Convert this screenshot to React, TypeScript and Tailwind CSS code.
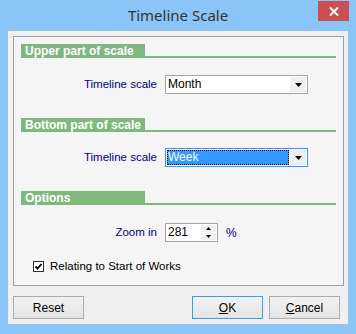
import React from "react";

const ui = { fontFamily: '"Liberation Sans", Arial, sans-serif' };

function Header({ title }: { title: string }) {
  return (
    <div className="flex h-[14px] ml-[7px] mr-[7px]">
      <div className="w-[124px] bg-[#7fb77f] text-white font-bold text-[12px] leading-[14px] pl-[4px] whitespace-nowrap overflow-hidden">
        {title}
      </div>
      <div className="flex-1 border-b-[2px] border-[#7fb77f]" />
    </div>
  );
}

function Arrow() {
  return (
    <svg width="7" height="4" viewBox="0 0 7 4">
      <path d="M0 0H7L3.5 4Z" fill="#000" />
    </svg>
  );
}

function Select({ value, focused }: { value: string; focused?: boolean }) {
  return (
    <div
      className={
        "ml-[8px] w-[143px] h-[19px] flex items-stretch bg-white border " +
        (focused ? "border-[#3399ff]" : "border-[#a5a5a5]")
      }
    >
      <div className="flex-1 flex items-stretch p-[1px]">
        {focused ? (
          <div className="flex-1 bg-[#3399ff] outline-1 outline-dotted outline-black -outline-offset-1 text-white text-[12px] leading-[15px] pl-[1px]">
            {value}
          </div>
        ) : (
          <div className="flex-1 text-black text-[12px] leading-[15px] pl-[1px]">{value}</div>
        )}
      </div>
      <div className="w-[16px] my-[1px] mr-[1px] bg-[#f0f0f0] flex items-center justify-center">
        <Arrow />
      </div>
    </div>
  );
}

function Button({ children, primary }: { children: React.ReactNode; primary?: boolean }) {
  return (
    <div
      className={
        "w-[71px] h-[23px] flex items-center justify-center text-[12px] text-black bg-gradient-to-b from-[#f2f2f2] to-[#e4e4e4] border " +
        (primary ? "border-[#3c9bf0]" : "border-[#acacac]")
      }
    >
      {children}
    </div>
  );
}

export default function App() {
  return (
    <div className="w-[356px] h-[334px] bg-[#8bc4f6] flex flex-col" style={ui}>
      <div className="relative h-[31px] flex items-center justify-center">
        <span className="text-[15px] text-[#333333]" style={{ fontFamily: '"Noto Sans", "Open Sans", sans-serif' }}>
          Timeline Scale
        </span>
        <div className="absolute right-[7px] top-[1px] w-[31px] h-[20px] bg-[#c75050] flex items-center justify-center">
          <svg width="10" height="9" viewBox="0 0 10 9">
            <path d="M1 0.5L9 8.5M9 0.5L1 8.5" stroke="#fff" strokeWidth="2" />
          </svg>
        </div>
      </div>

      <div className="ml-[8px] w-[340px] h-[293px] bg-[#f0f0f0] pt-[5px] pl-[5px]">
        <div className="w-[331px] h-[250px] bg-[#f5f5f5] border border-[#a0a0a0] pt-[7px]">
          <Header title="Upper part of scale" />
          <div className="flex items-center mt-[17px]">
            <div className="w-[143px] text-right text-[11.5px] text-[#00008b]">Timeline scale</div>
            <Select value="Month" />
          </div>

          <div className="mt-[24px]">
            <Header title="Bottom part of scale" />
          </div>
          <div className="flex items-center mt-[16px]">
            <div className="w-[143px] text-right text-[11.5px] text-[#00008b]">Timeline scale</div>
            <Select value="Week" focused />
          </div>

          <div className="mt-[24px]">
            <Header title="Options" />
          </div>
          <div className="flex items-center mt-[18px]">
            <div className="w-[143px] text-right text-[11.5px] text-[#00008b]">Zoom in</div>
            <div className="ml-[8px] w-[53px] h-[19px] bg-white border border-[#a5a5a5] flex">
              <div className="flex-1 text-[12px] leading-[17px] pl-[2px] text-black">281</div>
              <div className="w-[16px] flex flex-col">
                <div className="flex-1 bg-[#f0f0f0] mt-[1px] mr-[1px] mb-[0.5px] flex items-center justify-center">
                  <svg width="5" height="3" viewBox="0 0 5 3">
                    <path d="M0 3H5L2.5 0Z" fill="#000" />
                  </svg>
                </div>
                <div className="flex-1 bg-[#f0f0f0] mb-[1px] mr-[1px] mt-[0.5px] flex items-center justify-center">
                  <svg width="5" height="3" viewBox="0 0 5 3">
                    <path d="M0 0H5L2.5 3Z" fill="#000" />
                  </svg>
                </div>
              </div>
            </div>
            <span className="ml-[8px] text-[12px] text-[#00008b]">%</span>
          </div>

          <div className="flex items-center mt-[16px] pl-[19px]">
            <div className="w-[11px] h-[11px] bg-white border border-[#333] flex items-center justify-center">
              <svg width="9" height="9" viewBox="0 0 9 9">
                <path d="M1.5 4.5L3.5 6.5L7.5 2" stroke="#000" strokeWidth="1.8" fill="none" />
              </svg>
            </div>
            <span className="ml-[6px] text-[11.5px] text-black">Relating to Start of Works</span>
          </div>
        </div>

        <div className="flex mt-[10px] pr-[8px]">
          <Button>Reset</Button>
          <div className="flex-1" />
          <Button primary>
            <span className="underline">O</span>K
          </Button>
          <div className="w-[6px]" />
          <Button>
            <span className="underline">C</span>ancel
          </Button>
        </div>
      </div>
    </div>
  );
}
